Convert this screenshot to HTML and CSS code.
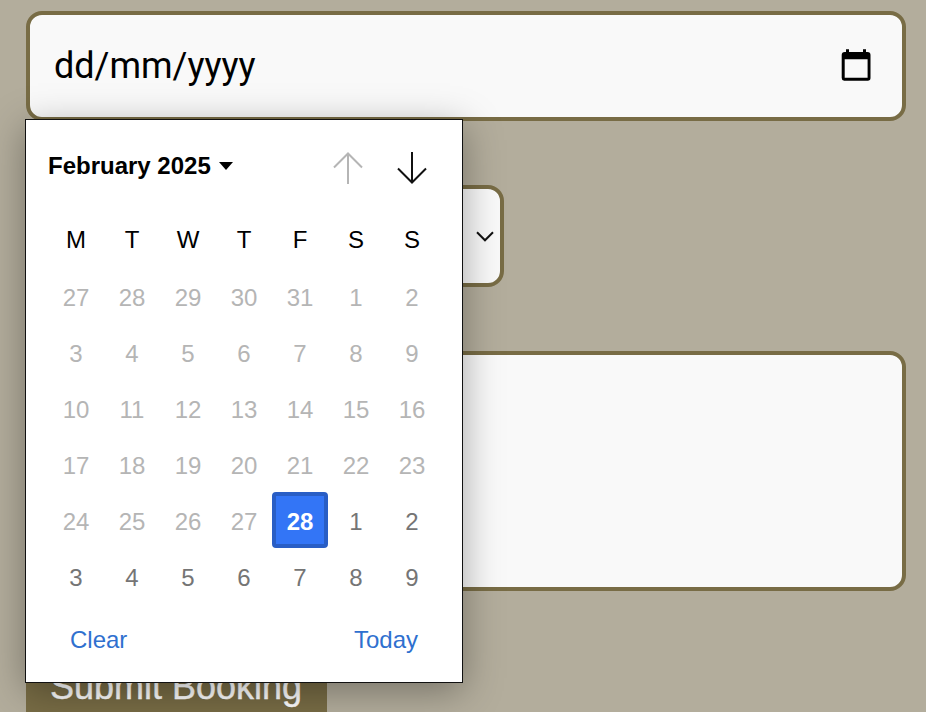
FILE: index.html
```html
<!DOCTYPE html>
<html lang="en">
<head>
<meta charset="utf-8">
<title>Booking</title>
<link rel="stylesheet" href="styles.css">
</head>
<body>
<form class="form">
  <div class="field date">
    <span>dd/mm/yyyy</span>
    <svg class="cal-icon" width="30" height="32" viewBox="0 0 30 32"><path fill="#000" fill-rule="evenodd" d="M5 .3h3v2.700h14V.3h3v2.700h1.500a3 3 0 0 1 3 3v23a2.700 2.700 0 0 1-2.700 2.700H3.200A2.700 2.700 0 0 1 .7 29V6a3 3 0 0 1 3-3H5zM3.700 10.200v18.600h22.900V10.200z"/></svg>
  </div>
  <div class="field select">
    <svg width="18" height="11" viewBox="0 0 18 11"><path d="M1 1.300 9 9.300 17 1.300" fill="none" stroke="#111" stroke-width="2"/></svg>
  </div>
  <div class="field textarea"></div>
  <div class="submit">Submit Booking</div>
</form>
<div class="picker">
  <div class="head">
    <div class="month">February 2025 <svg width="14" height="8" viewBox="0 0 14 8"><path d="M0 0h14L7 8z"/></svg></div>
    <div class="arrows">
      <svg class="off" width="30" height="32" viewBox="0 0 30 32"><path d="M15 32V1.500M1 15.500l14-14 14 14" fill="none" stroke="currentColor" stroke-width="2"/></svg>
      <svg width="30" height="32" viewBox="0 0 30 32"><path d="M15 0v30.500M1 16.500l14 14 14-14" fill="none" stroke="currentColor" stroke-width="2"/></svg>
    </div>
  </div>
  <div class="grid week"><span>M</span><span>T</span><span>W</span><span>T</span><span>F</span><span>S</span><span>S</span></div>
  <div class="grid days">
    <span>27</span><span>28</span><span>29</span><span>30</span><span>31</span><span>1</span><span>2</span>
    <span>3</span><span>4</span><span>5</span><span>6</span><span>7</span><span>8</span><span>9</span>
    <span>10</span><span>11</span><span>12</span><span>13</span><span>14</span><span>15</span><span>16</span>
    <span>17</span><span>18</span><span>19</span><span>20</span><span>21</span><span>22</span><span>23</span>
    <span>24</span><span>25</span><span>26</span><span>27</span><span class="selected">28</span><span class="next">1</span><span class="next">2</span>
    <span class="next">3</span><span class="next">4</span><span class="next">5</span><span class="next">6</span><span class="next">7</span><span class="next">8</span><span class="next">9</span>
  </div>
  <div class="foot"><span>Clear</span><span>Today</span></div>
</div>
</body>
</html>
```
FILE: styles.css
```css
* { box-sizing: border-box; }
body {
  margin: 0;
  height: 712px;
  overflow: hidden;
  position: relative;
  background: #b3ad9c;
  font-family: "Liberation Sans", Arial, sans-serif;
}
.form {
  display: flex;
  flex-direction: column;
  align-items: flex-start;
  gap: 64px;
  padding: 11px 20px 0 26px;
}
.field {
  flex: none;
  width: 880px;
  background: #f9f9f9;
  border: 4px solid #786c45;
  border-radius: 16px;
  display: flex;
  align-items: center;
}
.date {
  height: 110px;
  justify-content: space-between;
  padding: 0 31px 2px 24px;
  font-family: Roboto, sans-serif;
  font-size: 36px;
  color: #000;
}
.date span { padding-top: 2px; }
.cal-icon { display: block; }
.select {
  width: 478px;
  height: 102px;
  justify-content: flex-end;
  padding-right: 6px;
}
.textarea { height: 240px; }
.submit {
  flex: none;
  width: 301px;
  height: 90px;
  padding-left: 24px;
  background: #786c45;
  color: #fff;
  font-size: 36px;
  -webkit-text-stroke: 0.4px #fff;
  line-height: 64px;
  white-space: nowrap;
}
.picker {
  position: absolute;
  left: 25px;
  top: 119px;
  width: 438px;
  height: 564px;
  padding: 0 22px;
  background: #fff;
  border: 1px solid #111;
  box-shadow: 0 8px 36px rgba(0, 0, 0, 0.34);
  font-size: 24px;
}
.head {
  height: 96px;
  display: flex;
  justify-content: space-between;
  align-items: center;
  padding-right: 13px;
}
.month {
  display: flex;
  align-items: center;
  gap: 8px;
  padding-bottom: 4px;
  font-weight: bold;
  color: #000;
}
.arrows { display: flex; gap: 34px; color: #111; }
.off { color: #b5b5b5; }
.grid { display: grid; grid-template-columns: repeat(7, 56px); }
.grid span { display: flex; align-items: center; justify-content: center; }
.week { height: 48px; color: #000; }
.days { margin-top: 4px; grid-auto-rows: 56px; color: #b5b5b5; }
.days span { padding-top: 4px; }
.days .next { color: #757575; }
.days .selected {
  background: #3375f6;
  border: 4px solid #295ec5;
  border-radius: 4px;
  color: #fff;
  font-weight: bold;
}
.foot {
  display: flex;
  justify-content: space-between;
  padding: 22px 22px 0;
  color: #2f70cf;
}
```
